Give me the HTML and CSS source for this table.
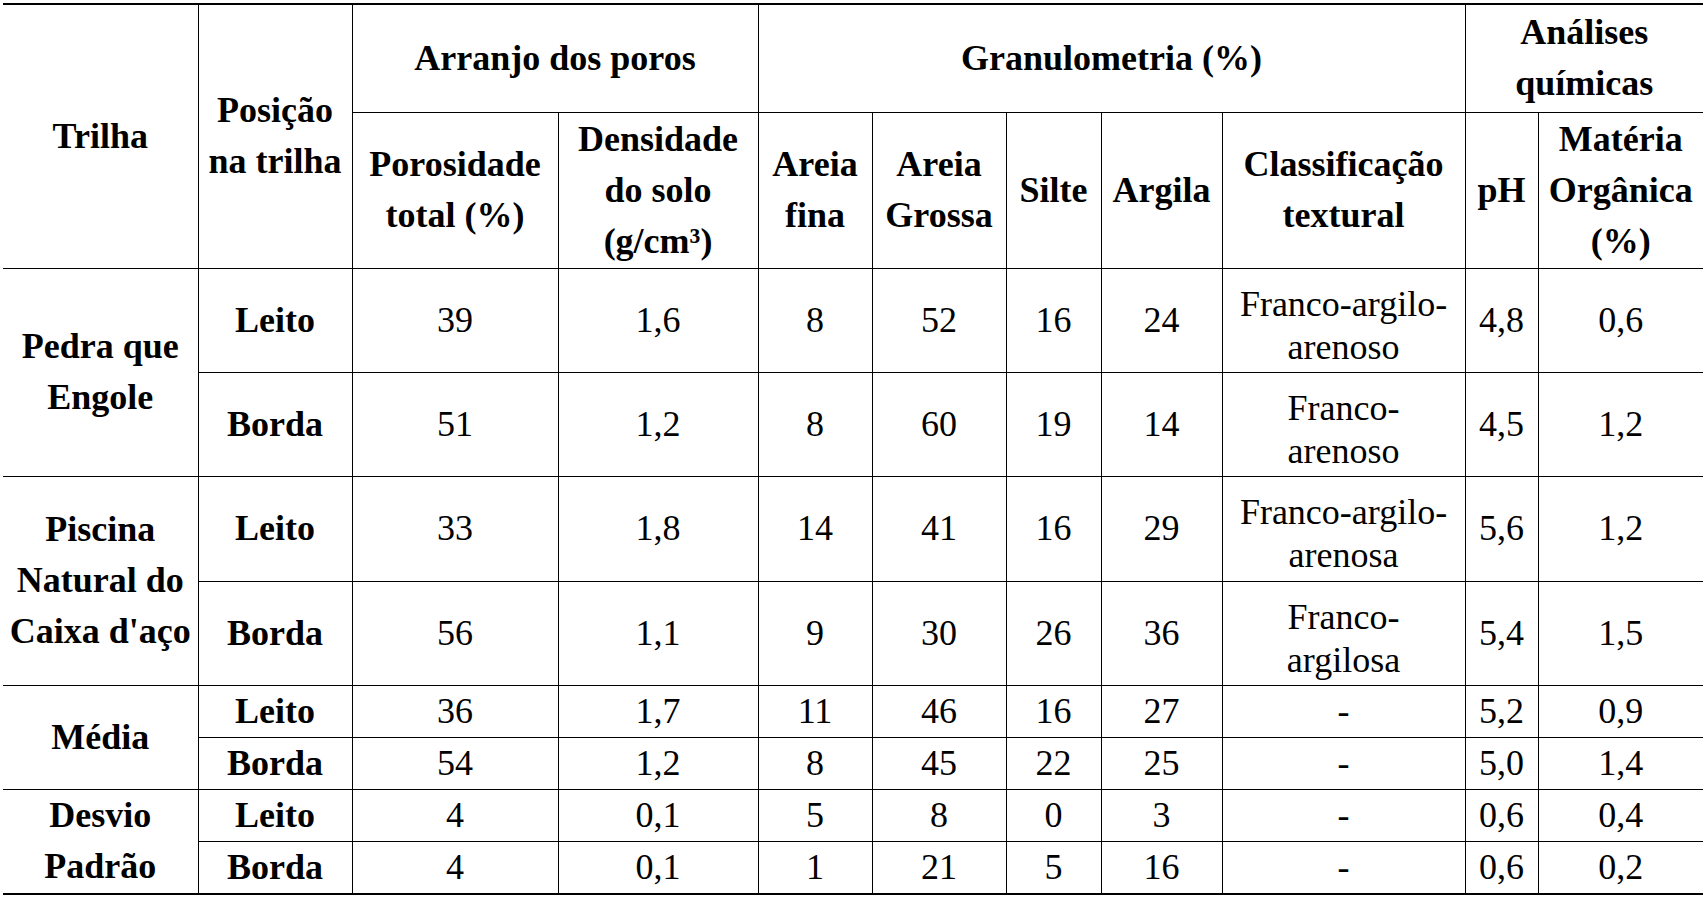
FILE: index.html
```html
<!DOCTYPE html>
<html lang="pt">
<head>
<meta charset="utf-8">
<title>Tabela de trilhas</title>
<link rel="stylesheet" href="styles.css">
</head>
<body>
<table class="data-table">
  <colgroup>
    <col class="c-trilha">
    <col class="c-pos">
    <col class="c-poro">
    <col class="c-dens">
    <col class="c-afina">
    <col class="c-agrossa">
    <col class="c-silte">
    <col class="c-argila">
    <col class="c-class">
    <col class="c-ph">
    <col class="c-mo">
  </colgroup>
  <thead>
    <tr class="h1">
      <th rowspan="2">Trilha</th>
      <th rowspan="2">Posição<br>na trilha</th>
      <th colspan="2">Arranjo dos poros</th>
      <th colspan="5">Granulometria (%)</th>
      <th colspan="2">Análises<br>químicas</th>
    </tr>
    <tr class="h2">
      <th>Porosidade<br>total (%)</th>
      <th>Densidade<br>do solo<br>(g/cm³)</th>
      <th>Areia<br>fina</th>
      <th>Areia<br>Grossa</th>
      <th>Silte</th>
      <th>Argila</th>
      <th>Classificação<br>textural</th>
      <th>pH</th>
      <th>Matéria<br>Orgânica<br>(%)</th>
    </tr>
  </thead>
  <tbody>
    <tr class="r-tall">
      <th rowspan="2" class="group">Pedra que<br>Engole</th>
      <th class="pos">Leito</th>
      <td>39</td><td>1,6</td><td>8</td><td>52</td><td>16</td><td>24</td>
      <td class="cls">Franco-argilo-<br>arenoso</td>
      <td>4,8</td><td>0,6</td>
    </tr>
    <tr class="r-tall">
      <th class="pos">Borda</th>
      <td>51</td><td>1,2</td><td>8</td><td>60</td><td>19</td><td>14</td>
      <td class="cls">Franco-<br>arenoso</td>
      <td>4,5</td><td>1,2</td>
    </tr>
    <tr class="r-tall r-tall-x">
      <th rowspan="2" class="group">Piscina<br>Natural do<br>Caixa d'aço</th>
      <th class="pos">Leito</th>
      <td>33</td><td>1,8</td><td>14</td><td>41</td><td>16</td><td>29</td>
      <td class="cls">Franco-argilo-<br>arenosa</td>
      <td>5,6</td><td>1,2</td>
    </tr>
    <tr class="r-tall">
      <th class="pos">Borda</th>
      <td>56</td><td>1,1</td><td>9</td><td>30</td><td>26</td><td>36</td>
      <td class="cls">Franco-<br>argilosa</td>
      <td>5,4</td><td>1,5</td>
    </tr>
    <tr class="r-short">
      <th rowspan="2" class="group">Média</th>
      <th class="pos">Leito</th>
      <td>36</td><td>1,7</td><td>11</td><td>46</td><td>16</td><td>27</td>
      <td>-</td>
      <td>5,2</td><td>0,9</td>
    </tr>
    <tr class="r-short">
      <th class="pos">Borda</th>
      <td>54</td><td>1,2</td><td>8</td><td>45</td><td>22</td><td>25</td>
      <td>-</td>
      <td>5,0</td><td>1,4</td>
    </tr>
    <tr class="r-short">
      <th rowspan="2" class="group">Desvio<br>Padrão</th>
      <th class="pos">Leito</th>
      <td>4</td><td>0,1</td><td>5</td><td>8</td><td>0</td><td>3</td>
      <td>-</td>
      <td>0,6</td><td>0,4</td>
    </tr>
    <tr class="r-short">
      <th class="pos">Borda</th>
      <td>4</td><td>0,1</td><td>1</td><td>21</td><td>5</td><td>16</td>
      <td>-</td>
      <td>0,6</td><td>0,2</td>
    </tr>
  </tbody>
</table>
</body>
</html>
```

FILE: styles.css
```css
html, body {
  margin: 0;
  padding: 0;
  background: #ffffff;
}

body {
  font-family: "Liberation Serif", "Times New Roman", serif;
  color: #000000;
}

.data-table {
  margin: 3px 0 0 3px;
  width: 1700px;
  table-layout: fixed;
  border-collapse: collapse;
  border-top: 2px solid #000;
  border-bottom: 2px solid #000;
  border-left: hidden;
  border-right: hidden;
  font-size: 36px;
}

.c-trilha { width: 195px; }
.c-pos { width: 154px; }
.c-poro { width: 206px; }
.c-dens { width: 200px; }
.c-afina { width: 114px; }
.c-agrossa { width: 134px; }
.c-silte { width: 95px; }
.c-argila { width: 121px; }
.c-class { width: 243px; }
.c-ph { width: 73px; }
.c-mo { width: 165px; }

.data-table th,
.data-table td {
  border: 1px solid #000;
  padding: 0 2px;
  text-align: center;
  vertical-align: middle;
  white-space: nowrap;
  overflow: hidden;
}

.data-table th {
  font-weight: bold;
  line-height: 51px;
}

.data-table td {
  font-weight: normal;
  line-height: 43px;
}

.data-table td.cls {
  padding-top: 11px;
}

.h1 { height: 108px; }
.h2 { height: 156px; }
.r-tall { height: 104px; }
.r-tall-x { height: 105px; }
.r-short { height: 52px; }
```
